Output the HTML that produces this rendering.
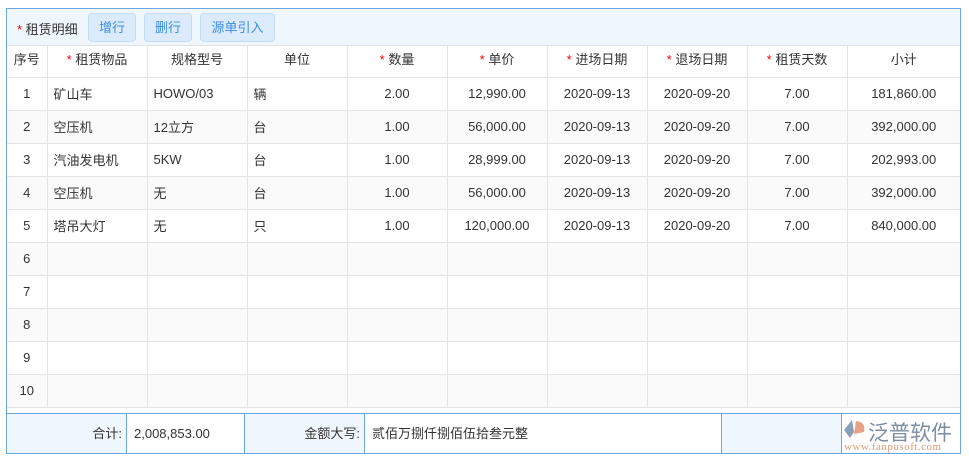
<!DOCTYPE html>
<html><head><meta charset="utf-8"><style>
*{box-sizing:border-box;margin:0;padding:0}
body{width:969px;height:462px;background:#fff;font-family:"Liberation Sans","Noto Sans CJK SC",sans-serif;font-size:13px;color:#333;position:relative;overflow:hidden}
.wrap{position:absolute;left:6px;top:8px;width:955px;height:446px;border:1px solid #6aa7dc;background:#fff}
.tb{position:absolute;left:0;top:0;width:953px;height:37px;background:#f0f6fe;border-bottom:1px solid #e2e2e2}
.tb .t{position:absolute;left:10px;top:10px;font-size:13px}
.st{color:#f00}
.btn{position:absolute;top:4px;height:29px;border:1px solid #c4dcf2;border-radius:4px;background:#dcebfb;color:#3d8ee0;font-size:13px;line-height:27px;text-align:center}
table{position:absolute;left:0;top:36px;border-collapse:collapse;table-layout:fixed}
td{height:33px;border-right:1px solid #e4e4e4;border-bottom:1px solid #e4e4e4;text-align:center;white-space:nowrap;padding:0}
td.l{text-align:left;padding-left:6px}
tr.h td{height:32px;padding-bottom:4px}
tr.g td{background:#fafafa}
td:last-child{border-right:none}
.ft{position:absolute;left:0;top:404px;width:953px;height:40px;border-top:1px solid #6aa7dc}
.ft div{position:absolute;top:0;height:39px;line-height:39px;border-right:1px solid #6aa7dc}
</style></head><body>
<div class="wrap">
<div class="tb"><span class="t"><span class="st">*</span> 租赁明细</span>
<div class="btn" style="left:81px;width:48px">增行</div>
<div class="btn" style="left:137px;width:48px">删行</div>
<div class="btn" style="left:193px;width:75px">源单引入</div>
</div>
<table>
<colgroup><col style="width:40px"><col style="width:100px"><col style="width:100px"><col style="width:100px"><col style="width:100px"><col style="width:100px"><col style="width:100px"><col style="width:100px"><col style="width:100px"><col style="width:113px"></colgroup>
<tr class="h"><td>序号</td><td><span class="st">*</span> 租赁物品</td><td>规格型号</td><td>单位</td><td><span class="st">*</span> 数量</td><td><span class="st">*</span> 单价</td><td><span class="st">*</span> 进场日期</td><td><span class="st">*</span> 退场日期</td><td><span class="st">*</span> 租赁天数</td><td>小计</td></tr>
<tr><td>1</td><td class="l">矿山车</td><td class="l">HOWO/03</td><td class="l">辆</td><td>2.00</td><td>12,990.00</td><td>2020-09-13</td><td>2020-09-20</td><td>7.00</td><td>181,860.00</td></tr>
<tr class="g"><td>2</td><td class="l">空压机</td><td class="l">12立方</td><td class="l">台</td><td>1.00</td><td>56,000.00</td><td>2020-09-13</td><td>2020-09-20</td><td>7.00</td><td>392,000.00</td></tr>
<tr><td>3</td><td class="l">汽油发电机</td><td class="l">5KW</td><td class="l">台</td><td>1.00</td><td>28,999.00</td><td>2020-09-13</td><td>2020-09-20</td><td>7.00</td><td>202,993.00</td></tr>
<tr class="g"><td>4</td><td class="l">空压机</td><td class="l">无</td><td class="l">台</td><td>1.00</td><td>56,000.00</td><td>2020-09-13</td><td>2020-09-20</td><td>7.00</td><td>392,000.00</td></tr>
<tr><td>5</td><td class="l">塔吊大灯</td><td class="l">无</td><td class="l">只</td><td>1.00</td><td>120,000.00</td><td>2020-09-13</td><td>2020-09-20</td><td>7.00</td><td>840,000.00</td></tr>
<tr class="g"><td>6</td><td></td><td></td><td></td><td></td><td></td><td></td><td></td><td></td><td></td></tr>
<tr><td>7</td><td></td><td></td><td></td><td></td><td></td><td></td><td></td><td></td><td></td></tr>
<tr class="g"><td>8</td><td></td><td></td><td></td><td></td><td></td><td></td><td></td><td></td><td></td></tr>
<tr><td>9</td><td></td><td></td><td></td><td></td><td></td><td></td><td></td><td></td><td></td></tr>
<tr class="g"><td>10</td><td></td><td></td><td></td><td></td><td></td><td></td><td></td><td></td><td></td></tr>
</table>
<div class="ft">
<div style="left:0;width:120px;background:#f0f6fe;text-align:right;padding-right:4px">合计:</div>
<div style="left:120px;width:118px;padding-left:7px">2,008,853.00</div>
<div style="left:238px;width:120px;background:#f0f6fe;text-align:right;padding-right:4px">金额大写:</div>
<div style="left:358px;width:357px;padding-left:7px">贰佰万捌仟捌佰伍拾叁元整</div>
<div style="left:715px;width:120px;background:#f0f6fe"></div>
<div style="left:835px;width:118px;border-right:none;line-height:normal;overflow:hidden">
<svg style="position:absolute;left:0;top:4px" width="26" height="22" viewBox="0 0 26 22"><path d="M10 2 L2 12 L8 20 L12 14 Z" fill="#8aa0b8"/><path d="M14 3 Q24 4 22 14 L12 16 Z" fill="#e6a283"/></svg>
<span style="position:absolute;left:26px;top:3px;font-size:21px;color:#7d8ea3;white-space:nowrap">泛普软件</span>
<span style="position:absolute;left:2px;top:27px;font-size:11px;color:#e09a78;font-family:'Liberation Serif',serif;letter-spacing:0.5px;white-space:nowrap">www.fanpusoft.com</span>
</div>
</div>
</div>
</body></html>
